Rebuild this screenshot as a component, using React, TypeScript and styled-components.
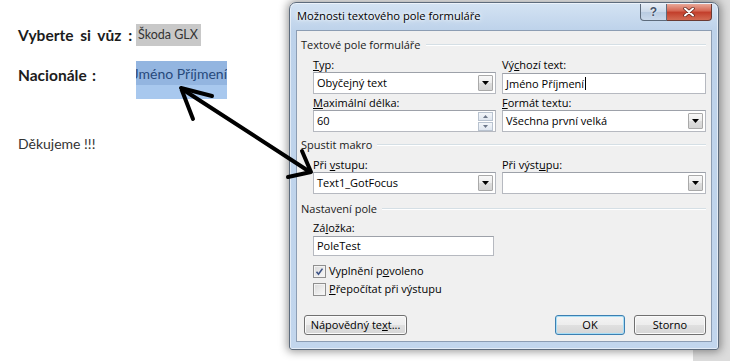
import styled, { createGlobalStyle } from "styled-components";

const GlobalStyle = createGlobalStyle`
  html, body {
    margin: 0;
    padding: 0;
    background: #fff;
  }
  body {
    width: 730px;
    height: 361px;
    overflow: hidden;
  }
`;

const UI_FONT = `"Open Sans", "Noto Sans", sans-serif`;

const Page = styled.div`
  position: relative;
  display: flex;
  width: 730px;
  height: 361px;
  overflow: hidden;
  background: linear-gradient(to right, #fff 0 693px, #dcdcdc 693px);
`;

/* ---------- Word document on the left ---------- */

const Doc = styled.div`
  flex: none;
  width: 289px;
  box-sizing: border-box;
  padding: 24px 0 0 18px;
  font-family: Lato, "Open Sans", sans-serif;
  color: #1c1c1c;
`;

const DocRow = styled.div<{ $after: number }>`
  display: grid;
  grid-template-columns: 118px auto;
  align-items: start;
  margin-bottom: ${(p) => p.$after}px;
`;

const DocLabel = styled.div<{ $lh: number; $spacing?: number }>`
  font-weight: 700;
  font-size: 15.5px;
  word-spacing: ${(p) => p.$spacing ?? 1.5}px;
  line-height: ${(p) => p.$lh}px;
  white-space: nowrap;
`;

const ShadedField = styled.span`
  justify-self: start;
  height: 22px;
  line-height: 22px;
  padding: 0 3px 0 2px;
  background: #c8c8c8;
  font-size: 12.5px;
  color: #333;
`;

const SelectedField = styled.div`
  display: flex;
  justify-content: flex-end;
  width: 91px;
  height: 38px;
  overflow: hidden;
  white-space: nowrap;
  background: linear-gradient(#93b5e0 0 24px, #a8c8ee 24px);
  color: #27497b;
  font-size: 14px;
  line-height: 26px;
`;

const Thanks = styled.div`
  font-size: 14px;
  line-height: 18px;
  color: #333;
`;

/* ---------- dialog window ---------- */

const Window = styled.div`
  flex: none;
  display: flex;
  flex-direction: column;
  margin-top: 2px;
  width: 430px;
  height: 348px;
  box-sizing: border-box;
  padding: 0 6px 7px 6px;
  border: 1px solid #5d6b7c;
  border-radius: 7px 7px 3px 3px;
  background: linear-gradient(#d4e3f3, #bdd2ea 28px, #c2d6ed);
  box-shadow: 0 0 9px 2px rgba(0, 0, 0, 0.38),
    inset 0 0 0 1px rgba(255, 255, 255, 0.55);
  font-family: ${UI_FONT};
  font-size: 11px;
  color: #000;
`;

const TitleBar = styled.div`
  display: flex;
  align-items: flex-start;
  height: 27px;
  flex: none;
`;

const Title = styled.div`
  margin: 6px 0 0 1px;
  line-height: 14px;
  font-size: 11.2px;
  color: #000;
  text-shadow: 0 0 6px #fff, 0 0 3px #fff;
`;

const Caption = styled.div`
  display: flex;
  margin: 1px 0 0 auto;
`;

const HelpButton = styled.div`
  width: 27px;
  height: 17px;
  box-sizing: border-box;
  border: 1px solid #5d6b7c;
  border-top: none;
  border-radius: 0 0 0 4px;
  background: linear-gradient(#e4ecf5, #cbd9ea 50%, #b8cbe1 50%, #cad9eb);
  display: flex;
  align-items: center;
  justify-content: center;
  font-family: "Liberation Sans", sans-serif;
  font-weight: 700;
  font-size: 12px;
  color: #44536a;
  text-shadow: 0 0 2px #fff;
`;

const CloseButton = styled.div`
  width: 45px;
  height: 17px;
  box-sizing: border-box;
  border: 1px solid #6a3a33;
  border-top: none;
  border-left: none;
  border-radius: 0 0 4px 0;
  background: linear-gradient(#e9a898, #d46450 45%, #c23d2a 50%, #d36a52);
  display: flex;
  align-items: center;
  justify-content: center;
`;

const Client = styled.div`
  flex: 1;
  display: flex;
  flex-direction: column;
  padding: 0 5px 6px 4px;
  border: 1px solid #8c9db3;
  background: #f0f0f0;
`;

const GroupHeader = styled.div<{ $top: number }>`
  display: flex;
  align-items: center;
  gap: 5px;
  margin-top: ${(p) => p.$top}px;
  height: 14px;
  line-height: 14px;
  white-space: nowrap;
  color: #1a1a1a;

  &::after {
    content: "";
    flex: 1;
    height: 0;
    border-top: 1px solid #d5dfe5;
    border-bottom: 1px solid #fff;
  }
`;

const FieldGrid = styled.div<{ $top: number; $single?: boolean }>`
  display: grid;
  grid-template-columns: ${(p) => (p.$single ? "181px" : "183px 204px")};
  column-gap: 6px;
  row-gap: 2px;
  margin-top: ${(p) => p.$top}px;
  padding-left: 12px;
`;

const Field = styled.div`
  display: flex;
  flex-direction: column;
`;

const FieldLabel = styled.div`
  height: 14px;
  line-height: 14px;
  white-space: nowrap;
`;

const Box = styled.div<{ $h: number; $top?: number }>`
  display: flex;
  align-items: center;
  height: ${(p) => p.$h}px;
  margin-top: ${(p) => p.$top ?? 0}px;
  box-sizing: border-box;
  padding: 0 2px 0 3px;
  background: #fff;
  border: 1px solid #b6b9c0;
  border-top-color: #9da1a9;
  white-space: nowrap;
`;

const BoxText = styled.span`
  flex: 1;
  line-height: 14px;
`;

const Caret = styled.span`
  display: inline-block;
  width: 0;
  height: 13px;
  border-left: 1px solid #000;
  vertical-align: -2px;
  margin-left: 1px;
`;

const DropButton = styled.div`
  flex: none;
  width: 15px;
  height: 16px;
  box-sizing: border-box;
  border: 1px solid #a9a9a9;
  border-radius: 1px;
  background: linear-gradient(#f8f8f8, #ececec 50%, #dedede 50%, #d4d4d4);
  display: flex;
  align-items: center;
  justify-content: center;
`;

const Spinner = styled.div`
  flex: none;
  display: flex;
  flex-direction: column;
  gap: 1px;
  width: 15px;
`;

const SpinHalf = styled.div`
  height: 9px;
  box-sizing: border-box;
  border: 1px solid #b8c2cf;
  background: linear-gradient(#f3f6fa, #dfe6ef);
  display: flex;
  align-items: center;
  justify-content: center;
`;

const CheckList = styled.div`
  display: flex;
  flex-direction: column;
  gap: 2px;
  margin-top: 7px;
  padding-left: 12px;
`;

const CheckRow = styled.label`
  display: flex;
  align-items: center;
  gap: 3px;
  height: 16px;
  line-height: 14px;
`;

const CheckBox = styled.span`
  flex: none;
  width: 13px;
  height: 13px;
  box-sizing: border-box;
  border: 1px solid #8f8f8f;
  background: linear-gradient(135deg, #d9d9d9, #f9f9f9);
  box-shadow: inset 0 0 0 1px #f3f3f3;
  display: flex;
  align-items: center;
  justify-content: center;
`;

const ButtonRow = styled.div`
  display: flex;
  align-items: center;
  gap: 9px;
  margin-top: auto;
  padding-left: 3px;
`;

const PushButton = styled.button<{ $w: number; $default?: boolean }>`
  width: ${(p) => p.$w}px;
  height: 20px;
  padding: 0;
  border: 1px solid ${(p) => (p.$default ? "#3c7fb1" : "#707070")};
  border-radius: 3px;
  background: linear-gradient(#f4f4f4, #ededed 50%, #e0e0e0 50%, #d6d6d6);
  box-shadow: inset 0 0 0 1px ${(p) => (p.$default ? "#a8def6" : "#fbfbfb")};
  font-family: ${UI_FONT};
  font-size: 11px;
  color: #000;
  line-height: 14px;
`;

const Spacer = styled.div`
  flex: 1;
`;

const ArrowLayer = styled.svg`
  position: absolute;
  left: 0;
  top: 0;
  pointer-events: none;
`;

function DownArrow() {
  return (
    <svg width="7" height="4" viewBox="0 0 7 4">
      <path d="M0 0h7L3.5 4z" fill="#000" />
    </svg>
  );
}

function Combo({ value }: { value: string }) {
  return (
    <Box $h={22}>
      <BoxText>{value}</BoxText>
      <DropButton>
        <DownArrow />
      </DropButton>
    </Box>
  );
}

export default function App() {
  return (
    <>
      <GlobalStyle />
      <Page>
        <Doc>
          <DocRow $after={15}>
            <DocLabel $lh={22} $spacing={3}>
              Vyberte si vůz :
            </DocLabel>
            <ShadedField>Škoda GLX</ShadedField>
          </DocRow>
          <DocRow $after={36}>
            <DocLabel $lh={28}>Nacionále :</DocLabel>
            <SelectedField>Jméno Příjmení</SelectedField>
          </DocRow>
          <Thanks>Děkujeme !!!</Thanks>
        </Doc>

        <Window>
          <TitleBar>
            <Title>Možnosti textového pole formuláře</Title>
            <Caption>
              <HelpButton>?</HelpButton>
              <CloseButton>
                <svg width="12" height="10" viewBox="0 0 12 10">
                  <path
                    d="M2 1.5l8 7M10 1.5l-8 7"
                    stroke="#5a2018"
                    strokeWidth="3.4"
                    strokeLinecap="round"
                  />
                  <path
                    d="M2 1.5l8 7M10 1.5l-8 7"
                    stroke="#fff"
                    strokeWidth="2"
                    strokeLinecap="round"
                  />
                </svg>
              </CloseButton>
            </Caption>
          </TitleBar>

          <Client>
            <GroupHeader $top={7}>Textové pole formuláře</GroupHeader>
            <FieldGrid $top={6}>
              <Field>
                <FieldLabel>
                  <u>T</u>yp:
                </FieldLabel>
                <Combo value="Obyčejný text" />
              </Field>
              <Field>
                <FieldLabel>
                  Vý<u>c</u>hozí text:
                </FieldLabel>
                <Box $h={21} $top={1}>
                  <BoxText>
                    Jméno Příjmení
                    <Caret />
                  </BoxText>
                </Box>
              </Field>
              <Field>
                <FieldLabel>
                  <u>M</u>aximální délka:
                </FieldLabel>
                <Box $h={22}>
                  <BoxText>60</BoxText>
                  <Spinner>
                    <SpinHalf>
                      <svg width="5" height="3" viewBox="0 0 5 3">
                        <path d="M0 3h5L2.5 0z" fill="#6c7789" />
                      </svg>
                    </SpinHalf>
                    <SpinHalf>
                      <svg width="5" height="3" viewBox="0 0 5 3">
                        <path d="M0 0h5L2.5 3z" fill="#6c7789" />
                      </svg>
                    </SpinHalf>
                  </Spinner>
                </Box>
              </Field>
              <Field>
                <FieldLabel>
                  <u>F</u>ormát textu:
                </FieldLabel>
                <Combo value="Všechna první velká" />
              </Field>
            </FieldGrid>

            <GroupHeader $top={6}>Spustit makro</GroupHeader>
            <FieldGrid $top={6}>
              <Field>
                <FieldLabel>
                  Při <u>v</u>stupu:
                </FieldLabel>
                <Combo value="Text1_GotFocus" />
              </Field>
              <Field>
                <FieldLabel>
                  Při výst<u>u</u>pu:
                </FieldLabel>
                <Combo value="" />
              </Field>
            </FieldGrid>

            <GroupHeader $top={8}>Nastavení pole</GroupHeader>
            <FieldGrid $top={5} $single>
              <Field>
                <FieldLabel>
                  Zá<u>l</u>ožka:
                </FieldLabel>
                <Box $h={20} $top={1}>
                  <BoxText>PoleTest</BoxText>
                </Box>
              </Field>
            </FieldGrid>

            <CheckList>
              <CheckRow>
                <CheckBox>
                  <svg width="9" height="9" viewBox="0 0 9 9">
                    <path
                      d="M1.5 4.8l2 2.4 4-5.6"
                      stroke="#3d5386"
                      strokeWidth="1.6"
                      fill="none"
                    />
                  </svg>
                </CheckBox>
                <span>
                  Vyplnění p<u>o</u>voleno
                </span>
              </CheckRow>
              <CheckRow>
                <CheckBox />
                <span>
                  <u>P</u>řepočítat při výstupu
                </span>
              </CheckRow>
            </CheckList>

            <ButtonRow>
              <PushButton $w={103}>
                Nápovědný te<u>x</u>t...
              </PushButton>
              <Spacer />
              <PushButton $w={70} $default>
                OK
              </PushButton>
              <PushButton $w={72}>Storno</PushButton>
            </ButtonRow>
          </Client>
        </Window>

        <ArrowLayer width="730" height="361" viewBox="0 0 730 361">
          <g stroke="#000" strokeWidth="4" strokeLinecap="round" fill="none">
            <path d="M182 89L310 172" />
            <path d="M181 88L212 96M181 88L193 119" />
            <path d="M311 172L302 151M311 172L288 177" />
          </g>
        </ArrowLayer>
      </Page>
    </>
  );
}
